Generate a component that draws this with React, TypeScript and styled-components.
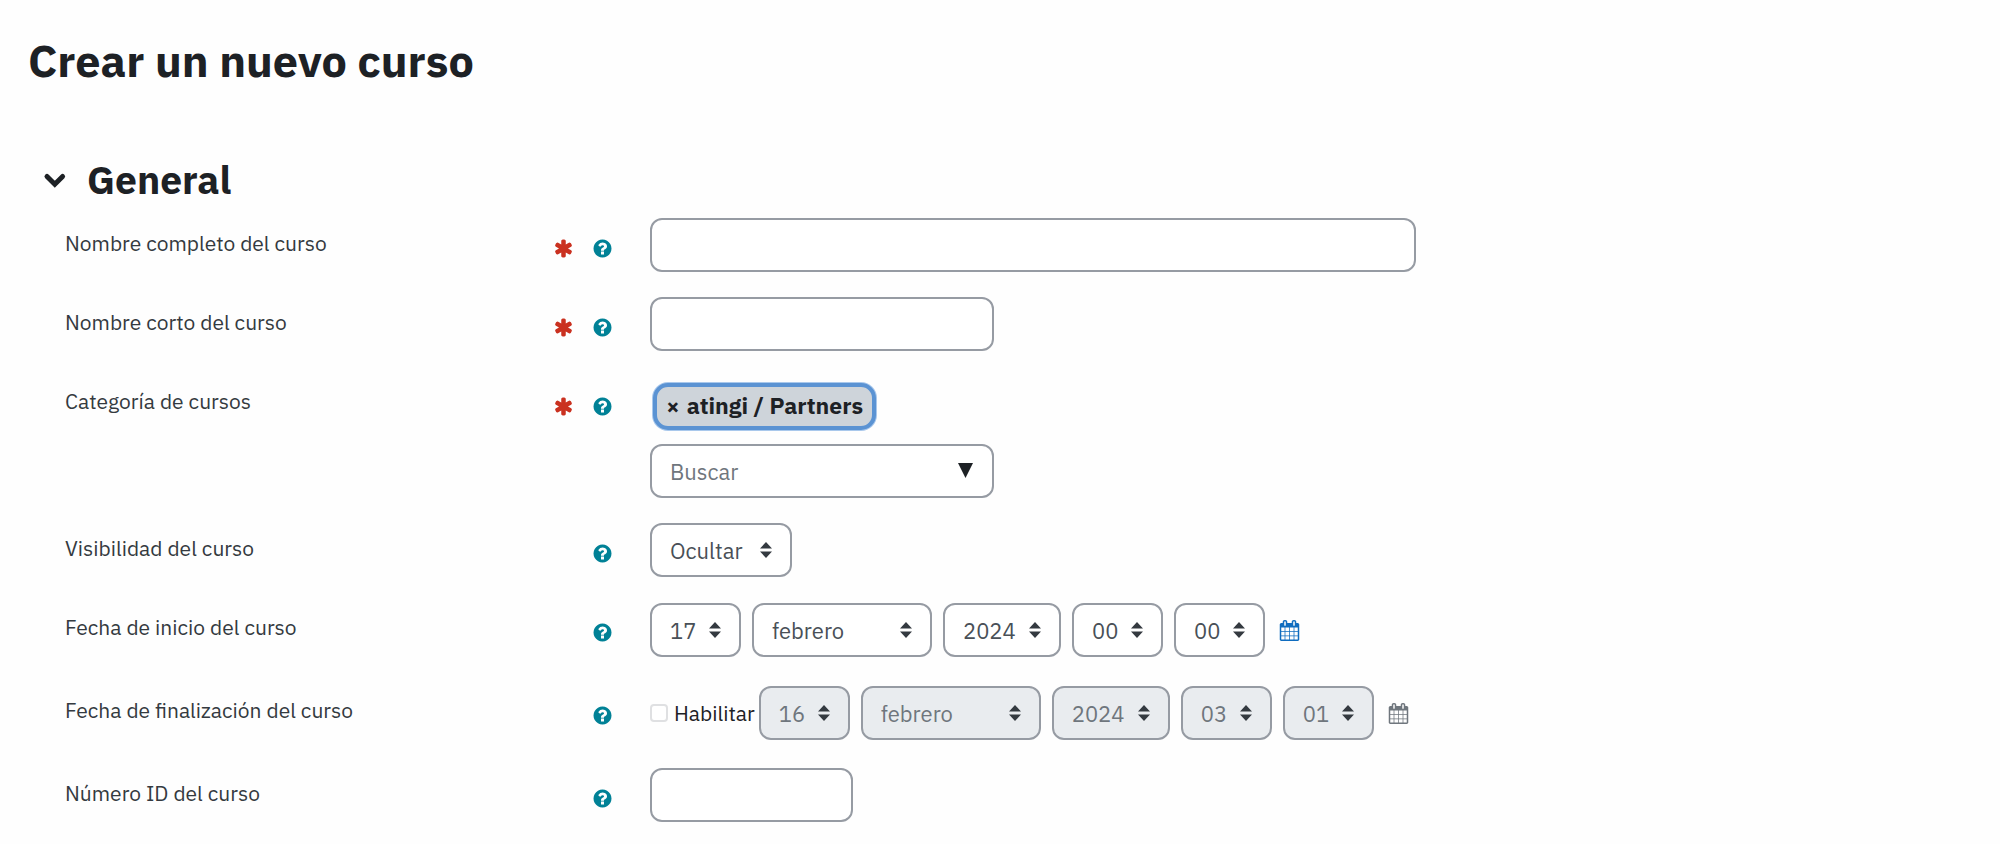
import React, { useState } from 'react';
import type { ReactNode } from 'react';
import styled, { createGlobalStyle, css } from 'styled-components';

const color = {
  text: '#1d2125',
  label: '#343a40',
  field: '#495057',
  muted: '#6f767d',
  border: '#969ba3',
  disabled: '#e9ecef',
  chip: '#ced4da',
  ring: '#5b93d3',
  ringEdge: '#a9c8ec',
  teal: '#008196',
  red: '#ca3120',
  blue: '#0f6cbf',
};

const GlobalStyle = createGlobalStyle`
  *, *::before, *::after { box-sizing: border-box; }
  body {
    margin: 0;
    background: #fefefe;
    color: ${color.text};
    font-family: "IBM Plex Sans", "Noto Sans", sans-serif;
    font-size: 21px;
    line-height: 30px;
  }
`;

const Page = styled.main`
  padding: 32px 48px 20px 28px;
`;

const Title = styled.h1`
  margin: 0 0 64px;
  font-size: 45px;
  font-weight: 700;
  line-height: 56px;
`;

const SectionHeading = styled.h2`
  display: flex;
  align-items: center;
  gap: 19px;
  margin: 0 0 10px;
  padding-left: 14px;
  font-size: 39px;
  font-weight: 700;
  line-height: 56px;
`;

const ToggleButton = styled.button`
  display: flex;
  padding: 0;
  border: 0;
  background: none;
  color: inherit;
  cursor: pointer;
`;

const Rows = styled.form`
  display: grid;
  gap: 25px;
  padding-left: 37px;
`;

const Row = styled.div`
  display: grid;
  grid-template-columns: 31% minmax(0, 1fr);
  align-items: start;
`;

const LabelCell = styled.div`
  display: flex;
  align-items: flex-start;
  gap: 18px;
  padding-right: 37px;
`;

const LabelText = styled.label`
  flex: 1;
  padding-top: 10px;
  color: ${color.label};
`;

const RequiredMark = styled.span`
  display: flex;
  padding-top: 20px;
  color: ${color.red};
`;

const HelpButton = styled.button`
  display: flex;
  padding: 20px 0 0;
  border: 0;
  background: none;
  color: ${color.teal};
  cursor: pointer;
`;

const fieldBox = css`
  height: 54px;
  border: 2px solid ${color.border};
  border-radius: 12px;
  background: #fff;
  color: ${color.field};
  font-family: inherit;
  font-size: 22px;
`;

const TextInput = styled.input<{ $width: number }>`
  ${fieldBox}
  display: block;
  width: ${(p) => p.$width}px;
  max-width: 100%;
  padding: 0 18px;

  &::placeholder {
    color: ${color.muted};
    opacity: 1;
  }
`;

const SelectFrame = styled.span`
  position: relative;
  display: inline-flex;
  justify-self: start;
`;

const NativeSelect = styled.select<{ $width: number }>`
  ${fieldBox}
  width: ${(p) => p.$width}px;
  padding: 0 0 0 18px;
  appearance: none;

  &:disabled {
    background: ${color.disabled};
    color: ${color.muted};
    opacity: 1;
  }
`;

const SelectArrows = styled.svg`
  position: absolute;
  top: 19px;
  right: 20px;
  pointer-events: none;
`;

const ComboBox = styled.div`
  position: relative;
  width: 344px;
  max-width: 100%;
`;

const ComboButton = styled.button`
  position: absolute;
  top: 19px;
  right: 21px;
  display: flex;
  padding: 0;
  border: 0;
  background: none;
  color: ${color.text};
`;

const CategoryField = styled.div`
  display: flex;
  flex-direction: column;
  align-items: flex-start;
  gap: 14px;
  padding-top: 7px;
`;

const Chip = styled.button`
  display: flex;
  align-items: center;
  gap: 7px;
  height: 47px;
  margin-left: 3px;
  padding: 0 9px 3px;
  border: 4px solid ${color.ring};
  border-radius: 15px;
  box-shadow: 0 0 0 1px ${color.ringEdge};
  background: ${color.chip};
  color: ${color.text};
  font: inherit;
  font-size: 23px;
  font-weight: 700;
`;

const DateGroup = styled.div`
  display: flex;
  align-items: center;
  padding: 1px 0 3px;
`;

const DateSelects = styled.div`
  display: flex;
  gap: 11px;
`;

const EnableLabel = styled.label`
  display: flex;
  align-items: center;
  gap: 6px;
  margin-right: 4px;
`;

const CheckBox = styled.input`
  appearance: none;
  width: 18px;
  height: 18px;
  margin: 0;
  border: 2px solid #dfe0e2;
  border-radius: 4px;
  background: #fff;

  &:checked {
    border-color: ${color.blue};
    background: ${color.blue};
  }
`;

const CalendarLink = styled.a<{ $muted?: boolean }>`
  display: flex;
  margin-left: 14px;
  color: ${(p) => (p.$muted ? color.muted : color.blue)};
`;

const Glyph = ({ d }: { d: string }) => (
  <svg width="21" height="21" viewBox="0 0 1792 1792" fill="currentColor" aria-hidden="true">
    <path d={d} />
  </svg>
);

const ASTERISK =
  'M1546 1050q46 26 59.5 77.5t-12.5 97.5l-64 110q-26 46-77.5 59.5t-97.5-12.5l-266-153v307q0 52-38 90t-90 38h-128q-52 0-90-38t-38-90v-307l-266 153q-46 26-97.5 12.5t-77.5-59.5l-64-110q-26-46-12.5-97.5t59.5-77.5l266-154-266-154q-46-26-59.5-77.5t12.5-97.5l64-110q26-46 77.5-59.5t97.5 12.5l266 153v-307q0-52 38-90t90-38h128q52 0 90 38t38 90v307l266-153q46-26 97.5-12.5t77.5 59.5l64 110q26 46 12.5 97.5t-59.5 77.5l-266 154z';
const QUESTION =
  'M1024 1376v-192q0-14-9-23t-23-9h-192q-14 0-23 9t-9 23v192q0 14 9 23t23 9h192q14 0 23-9t9-23zm256-672q0-88-55.5-163t-138.5-116-170-41q-243 0-371 213-15 24 8 42l132 100q7 6 19 6 16 0 25-12 53-68 86-92 34-24 86-24 48 0 85.5 26t37.5 59q0 38-20 61t-68 45q-63 28-115.5 86.5t-52.5 125.5v36q0 14 9 23t23 9h192q14 0 23-9t9-23q0-19 21.5-49.5t54.5-49.5q32-18 49-28.5t46-35 44.5-48 28-60.5 12.5-81zm384 192q0 209-103 385.5t-279.5 279.5-385.5 103-385.5-103-279.5-279.5-103-385.5 103-385.5 279.5-279.5 385.5-103 385.5 103 279.5 279.5 103 385.5z';
const CALENDAR =
  'M192 1664h288v-288h-288v288zm352 0h320v-288h-320v288zm-352-352h288v-320h-288v320zm352 0h320v-320h-320v320zm-352-384h288v-288h-288v288zm736 736h320v-288h-320v288zm-384-736h320v-288h-320v288zm768 736h288v-288h-288v288zm-384-352h320v-320h-320v320zm-352-864v-288q0-13-9.5-22.5t-22.5-9.5h-64q-13 0-22.5 9.5t-9.5 22.5v288q0 13 9.5 22.5t22.5 9.5h64q13 0 22.5-9.5t9.5-22.5zm736 864h288v-320h-288v320zm-384-384h320v-288h-320v288zm384 0h288v-288h-288v288zm32-480v-288q0-13-9.5-22.5t-22.5-9.5h-64q-13 0-22.5 9.5t-9.5 22.5v288q0 13 9.5 22.5t22.5 9.5h64q13 0 22.5-9.5t9.5-22.5zm384-64v1280q0 52-38 90t-90 38h-1408q-52 0-90-38t-38-90v-1280q0-52 38-90t90-38h128v-96q0-66 47-113t113-47h64q66 0 113 47t47 113v96h384v-96q0-66 47-113t113-47h64q66 0 113 47t47 113v96h128q52 0 90 38t38 90z';

interface FieldRowProps {
  id: string;
  label: string;
  required?: boolean;
  children: ReactNode;
}

const FieldRow = ({ id, label, required, children }: FieldRowProps) => (
  <Row>
    <LabelCell>
      <LabelText htmlFor={id}>{label}</LabelText>
      {required && (
        <RequiredMark role="img" aria-label="Obligatorio">
          <Glyph d={ASTERISK} />
        </RequiredMark>
      )}
      <HelpButton type="button" aria-label={`Ayuda sobre ${label}`}>
        <Glyph d={QUESTION} />
      </HelpButton>
    </LabelCell>
    {children}
  </Row>
);

interface SelectProps {
  id: string;
  name?: string;
  value: string;
  width: number;
  disabled?: boolean;
}

const Select = ({ id, name, value, width, disabled }: SelectProps) => (
  <SelectFrame>
    <NativeSelect id={id} aria-label={name} defaultValue={value} $width={width} disabled={disabled}>
      <option>{value}</option>
    </NativeSelect>
    <SelectArrows width="12" height="16" viewBox="0 0 12 16" fill="#343a40" aria-hidden="true">
      <path d="M0 6.5 6 0l6 6.5zM0 9.5h12L6 16z" />
    </SelectArrows>
  </SelectFrame>
);

const dateParts = [
  { key: 'day', name: 'Día', width: 91 },
  { key: 'month', name: 'Mes', width: 180 },
  { key: 'year', name: 'Año', width: 118 },
  { key: 'hour', name: 'Hora', width: 91 },
  { key: 'minute', name: 'Minuto', width: 91 },
];

interface DatePickerProps {
  id: string;
  values: string[];
  disabled?: boolean;
}

const DatePicker = ({ id, values, disabled }: DatePickerProps) => (
  <>
    <DateSelects>
      {dateParts.map((part, i) => (
        <Select
          key={part.key}
          id={i === 0 ? id : `${id}-${part.key}`}
          name={part.name}
          value={values[i]}
          width={part.width}
          disabled={disabled}
        />
      ))}
    </DateSelects>
    <CalendarLink href="#calendario" aria-label="Calendario" $muted={disabled}>
      <Glyph d={CALENDAR} />
    </CalendarLink>
  </>
);

export default function App() {
  const [open, setOpen] = useState(true);
  const [endEnabled, setEndEnabled] = useState(false);

  return (
    <Page>
      <GlobalStyle />
      <Title>Crear un nuevo curso</Title>
      <SectionHeading>
        <ToggleButton type="button" aria-label="General" aria-expanded={open} onClick={() => setOpen(!open)}>
          <svg width="26" height="24" viewBox="0 0 26 24" fill="none" aria-hidden="true">
            <path d="M5 8.5 12.8 16.2 20.6 8.5" stroke="currentColor" strokeWidth="5" strokeLinecap="round" />
          </svg>
        </ToggleButton>
        General
      </SectionHeading>
      {open && (
        <Rows>
          <FieldRow id="fullname" label="Nombre completo del curso" required>
            <TextInput id="fullname" type="text" $width={766} />
          </FieldRow>
          <FieldRow id="shortname" label="Nombre corto del curso" required>
            <TextInput id="shortname" type="text" $width={344} />
          </FieldRow>
          <FieldRow id="category" label="Categoría de cursos" required>
            <CategoryField>
              <Chip type="button">
                <span aria-hidden="true">×</span>
                <span>atingi / Partners</span>
              </Chip>
              <ComboBox>
                <TextInput id="category" type="text" placeholder="Buscar" $width={344} />
                <ComboButton type="button" aria-label="Mostrar categorías">
                  <svg width="15" height="15" viewBox="0 0 15 15" fill="currentColor" aria-hidden="true">
                    <path d="M0 0h15L7.5 15z" />
                  </svg>
                </ComboButton>
              </ComboBox>
            </CategoryField>
          </FieldRow>
          <FieldRow id="visible" label="Visibilidad del curso">
            <Select id="visible" value="Ocultar" width={142} />
          </FieldRow>
          <FieldRow id="start" label="Fecha de inicio del curso">
            <DateGroup>
              <DatePicker id="start" values={['17', 'febrero', '2024', '00', '00']} />
            </DateGroup>
          </FieldRow>
          <FieldRow id="end" label="Fecha de finalización del curso">
            <DateGroup>
              <EnableLabel>
                <CheckBox type="checkbox" checked={endEnabled} onChange={(e) => setEndEnabled(e.target.checked)} />
                Habilitar
              </EnableLabel>
              <DatePicker id="end" values={['16', 'febrero', '2024', '03', '01']} disabled={!endEnabled} />
            </DateGroup>
          </FieldRow>
          <FieldRow id="idnumber" label="Número ID del curso">
            <TextInput id="idnumber" type="text" $width={203} />
          </FieldRow>
        </Rows>
      )}
    </Page>
  );
}
